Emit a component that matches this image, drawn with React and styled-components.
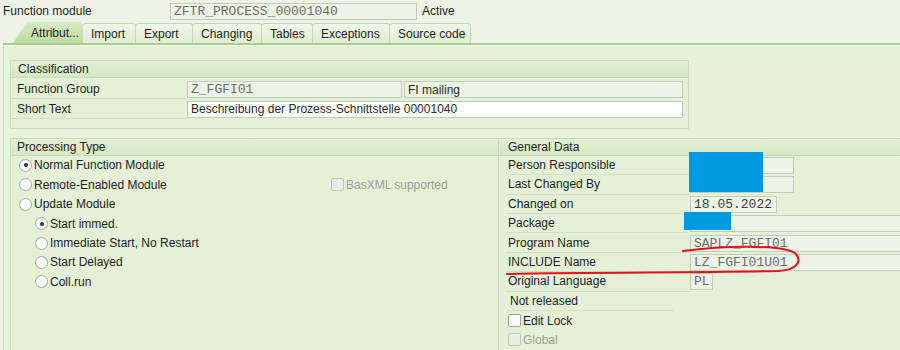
import React from "react";
import styled, { createGlobalStyle, css } from "styled-components";

const GlobalStyle = createGlobalStyle`
  body {
    margin: 0;
    background: #eef3e7;
    font-family: "Liberation Sans", Arial, sans-serif;
    font-size: 12px;
    color: #1e1e1e;
  }
`;

const Page = styled.div`
  position: relative;
  width: 900px;
  height: 350px;
  overflow: hidden;
  background: #eef3e7;
`;

const HeaderRow = styled.div`
  display: flex;
  align-items: center;
  height: 22px;
  padding-left: 3px;
`;

const HeaderLabel = styled.span`
  width: 167px;
`;

const Field = styled.div`
  box-sizing: border-box;
  flex-shrink: 0;
  display: flex;
  align-items: center;
  width: ${(p) => p.w || 100}px;
  height: 17px;
  padding: 0 3px;
  border: 1px solid #c3cbbb;
  background: ${(p) => (p.white ? "#ffffff" : "#edf4e6")};
  color: #2a2a2a;
  white-space: nowrap;
  overflow: hidden;
  ${(p) =>
    p.mono &&
    css`
      font-family: "Liberation Mono", "Courier New", monospace;
      font-size: 13px;
      color: #6b6b6b;
    `}
`;

const StatusText = styled.span`
  margin-left: 5px;
`;

const TabStrip = styled.div`
  display: flex;
  align-items: flex-end;
  height: 21px;
  margin-left: 3px;
  padding-left: 10px;
  border-bottom: 2px solid #a9d08a;
`;

const Tab = styled.div`
  box-sizing: border-box;
  width: ${(p) => p.w}px;
  height: 20px;
  padding-left: 8px;
  display: flex;
  align-items: center;
  border: 1px solid #c2d9ae;
  border-bottom: none;
  border-radius: 4px 3px 0 0;
  background: linear-gradient(#f1f7ea, #dfedd0);
  margin-right: -1px;
  ${(p) =>
    p.active &&
    css`
      height: 21px;
      padding-left: 18px;
      border: none;
      background: linear-gradient(#d8ebc4, #bcdc9f);
      clip-path: polygon(0 100%, 14px 0, calc(100% - 3px) 0, 100% 3px, 100% 100%);
    `}
`;

const Panel = styled.div`
  margin-left: 3px;
  height: 300px;
  padding: 14px 0 0 6px;
  background: #e6f2da;
  border-left: 1px solid #cadcb9;
  border-top: 1px solid #f4f9ef;
`;

const Group = styled.div`
  box-sizing: border-box;
  width: ${(p) => p.w}px;
  border: 1px solid #cbdabd;
  background: #e4f1d6;
  padding-bottom: ${(p) => p.pb || 0}px;
`;

const GroupHeader = styled.div`
  height: 16px;
  line-height: 16px;
  padding-left: ${(p) => p.pl || 7}px;
  background: linear-gradient(#e2efd5, #d6e8c4);
  border-bottom: 1px solid #c6d8b5;
`;

const Row = styled.div`
  display: flex;
  align-items: center;
  height: 19.4px;
  padding-left: ${(p) => p.pl || 0}px;
`;

const Label = styled.div`
  box-sizing: border-box;
  flex-shrink: 0;
  width: ${(p) => p.w}px;
  height: 100%;
  display: flex;
  align-items: center;
  padding-left: ${(p) => (p.pl === undefined ? 6 : p.pl)}px;
  border-bottom: 1px solid #cfdec2;
`;

const LowerArea = styled.div`
  display: flex;
  margin-top: 9px;
  border-top: 1px solid #cbdabd;
  background: #e4f1d6;
`;

const LeftCol = styled.div`
  flex: 0 0 487px;
  border-left: 1px solid #cbdabd;
`;

const RightCol = styled.div`
  flex: 1;
  min-width: 0;
  border-left: 1px solid #c4d6b3;
`;

const List = styled.div`
  padding-left: ${(p) => p.pl || 0}px;
`;

const Radio = styled.span`
  box-sizing: border-box;
  flex-shrink: 0;
  width: 13px;
  height: 13px;
  border-radius: 50%;
  border: 1px solid #a3aa9d;
  background: radial-gradient(circle, #ffffff 55%, #eef0ec);
  margin-right: 2px;
  display: inline-flex;
  align-items: center;
  justify-content: center;
  &::after {
    content: "";
    width: 4px;
    height: 4px;
    border-radius: 50%;
    background: ${(p) => (p.checked ? "#303030" : "transparent")};
  }
`;

const Check = styled.span`
  box-sizing: border-box;
  flex-shrink: 0;
  width: 13px;
  height: 13px;
  border-radius: 2px;
  border: 1px solid ${(p) => (p.disabled ? "#c0c6bb" : "#9aa394")};
  background: ${(p) => (p.disabled ? "#e9efe3" : "#ffffff")};
  margin-right: 2px;
`;

const OptionText = styled.span`
  flex-shrink: 0;
  width: ${(p) => (p.w ? `${p.w}px` : "auto")};
  color: ${(p) => (p.disabled ? "#9a9f96" : "inherit")};
`;

const Redaction = styled.div`
  position: absolute;
  background: #0099e0;
`;

const Annotation = styled.svg`
  position: absolute;
  left: 0;
  top: 0;
  pointer-events: none;
`;

const tabs = [
  ["Attribut...", 70],
  ["Import", 54],
  ["Export", 58],
  ["Changing", 70],
  ["Tables", 52],
  ["Exceptions", 78],
  ["Source code", 82],
];

const general = [
  ["Person Responsible", <Field w={104} />],
  ["Last Changed By", <Field w={104} />],
  ["Changed on", <Field mono w={87} style={{ color: "#3d3d3d" }}>18.05.2022</Field>],
  ["Package", <Field w={220} />],
  ["Program Name", <Field mono w={220}>SAPLZ_FGFI01</Field>],
  ["INCLUDE Name", <Field mono w={220}>LZ_FGFI01U01</Field>],
  ["Original Language", <Field mono w={23}>PL</Field>],
];

export default function App() {
  return (
    <Page>
      <GlobalStyle />
      <HeaderRow>
        <HeaderLabel>Function module</HeaderLabel>
        <Field mono w={247}>ZFTR_PROCESS_00001040</Field>
        <StatusText>Active</StatusText>
      </HeaderRow>

      <TabStrip>
        {tabs.map(([t, w], i) => (
          <Tab key={t} w={w} active={i === 0}>
            {t}
          </Tab>
        ))}
      </TabStrip>

      <Panel>
        <Group w={679} pb={9}>
          <GroupHeader>Classification</GroupHeader>
          <Row style={{ marginTop: 2 }}>
            <Label w={176}>Function Group</Label>
            <Field mono w={215}>Z_FGFI01</Field>
            <Field w={279} style={{ marginLeft: 2 }}>FI mailing</Field>
          </Row>
          <Row>
            <Label w={176}>Short Text</Label>
            <Field white w={496}>Beschreibung der Prozess-Schnittstelle 00001040</Field>
          </Row>
        </Group>

        <LowerArea>
          <LeftCol>
            <GroupHeader pl={6}>Processing Type</GroupHeader>
            <List pl={8}>
              <Row>
                <Radio checked />
                <OptionText>Normal Function Module</OptionText>
              </Row>
              <Row>
                <Radio />
                <OptionText w={297}>Remote-Enabled Module</OptionText>
                <Check disabled />
                <OptionText disabled>BasXML supported</OptionText>
              </Row>
              <Row>
                <Radio />
                <OptionText>Update Module</OptionText>
              </Row>
              <List pl={16}>
                <Row>
                  <Radio checked />
                  <OptionText>Start immed.</OptionText>
                </Row>
                <Row>
                  <Radio />
                  <OptionText>Immediate Start, No Restart</OptionText>
                </Row>
                <Row>
                  <Radio />
                  <OptionText>Start Delayed</OptionText>
                </Row>
                <Row>
                  <Radio />
                  <OptionText>Coll.run</OptionText>
                </Row>
              </List>
            </List>
          </LeftCol>

          <RightCol>
            <GroupHeader pl={9}>General Data</GroupHeader>
            <List pl={7}>
              {general.map(([l, f]) => (
                <Row key={l}>
                  <Label w={184} pl={2}>{l}</Label>
                  {f}
                </Row>
              ))}
              <Row>
                <Label w={168} pl={4}>Not released</Label>
              </Row>
              <Row pl={2}>
                <Check />
                <OptionText>Edit Lock</OptionText>
              </Row>
              <Row pl={2}>
                <Check disabled />
                <OptionText disabled>Global</OptionText>
              </Row>
            </List>
          </RightCol>
        </LowerArea>
      </Panel>

      <Redaction style={{ left: 689, top: 152, width: 74, height: 40 }} />
      <Redaction style={{ left: 684, top: 212, width: 47, height: 18 }} />

      <Annotation width="900" height="350">
        <path
          d="M683 251 C 720 246 780 244 795 253 C 803 261 797 270 778 271 C 700 273 600 272 507 274"
          fill="none"
          stroke="#e3121b"
          strokeWidth="2"
          strokeLinecap="round"
        />
      </Annotation>
    </Page>
  );
}
